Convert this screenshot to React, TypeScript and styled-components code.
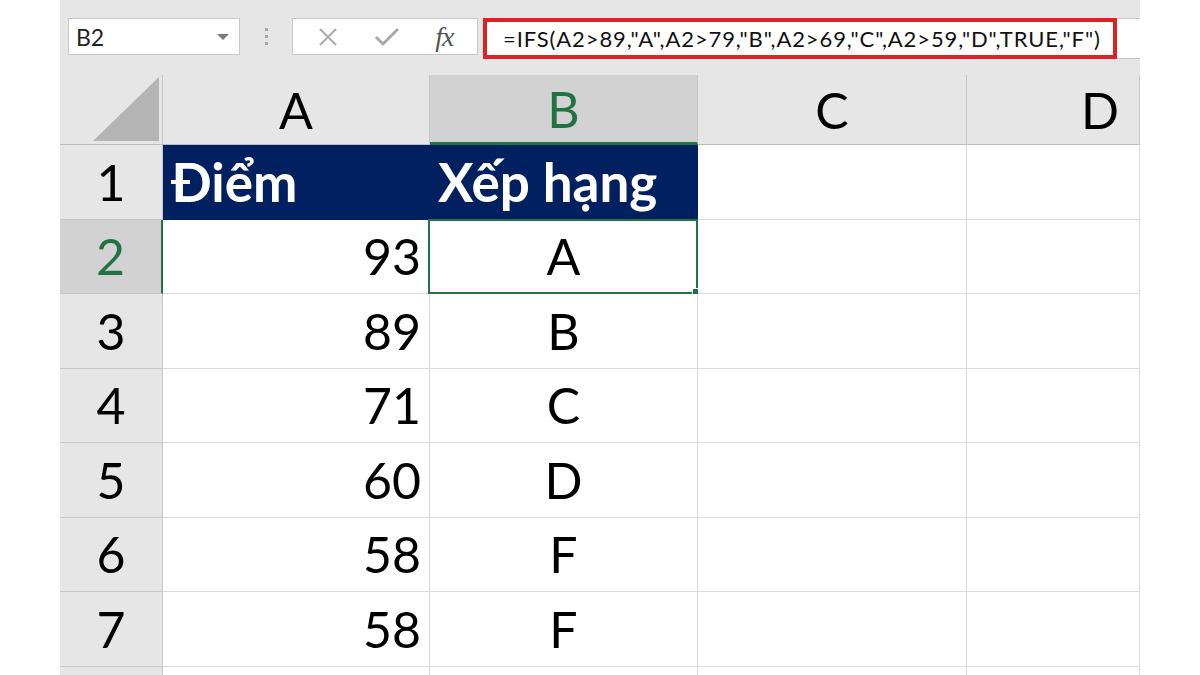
import React from 'react';
import styled, { createGlobalStyle } from 'styled-components';

const GlobalStyle = createGlobalStyle`
  html, body {
    margin: 0;
    padding: 0;
    background: #ffffff;
  }
  body {
    font-family: Lato, 'Open Sans', sans-serif;
  }
`;

const Page = styled.div`
  width: 1200px;
  height: 675px;
  overflow: hidden;
  background: #ffffff;
  display: flex;
  justify-content: center;
`;

const Sheet = styled.div`
  width: 1080px;
  height: 675px;
  display: flex;
  flex-direction: column;
  background: #e6e6e6;
  overflow: hidden;
`;

const FormulaBar = styled.div`
  height: 75px;
  flex-shrink: 0;
  display: flex;
  align-items: flex-start;
  padding: 18px 0 0 8px;
  box-sizing: border-box;
`;

const NameBox = styled.div`
  width: 172px;
  height: 37px;
  box-sizing: border-box;
  background: #ffffff;
  border: 1px solid #c8c8c8;
  display: flex;
  align-items: center;
  justify-content: space-between;
  padding: 0 10px 0 7px;
  font-size: 23px;
  color: #222;
`;

const Caret = styled.span`
  width: 0;
  height: 0;
  border-left: 6px solid transparent;
  border-right: 6px solid transparent;
  border-top: 6px solid #7a7a7a;
`;

const Dots = styled.div`
  width: 52px;
  height: 37px;
  display: flex;
  flex-direction: column;
  align-items: center;
  justify-content: center;
  gap: 4px;
`;

const Dot = styled.span`
  width: 3px;
  height: 3px;
  background: #a6a6a6;
`;

const ButtonBox = styled.div`
  width: 186px;
  height: 37px;
  box-sizing: border-box;
  background: #ffffff;
  border: 1px solid #c8c8c8;
  display: flex;
  align-items: center;
  justify-content: space-around;
  padding: 0 6px;
`;

const Fx = styled.span`
  font-family: 'Liberation Serif', serif;
  font-style: italic;
  font-size: 28px;
  color: #555;
  letter-spacing: -1px;
`;

const FormulaInput = styled.div`
  flex: 1;
  margin-left: 5px;
  height: 39px;
  display: flex;
  background: #ffffff;
  border-top: 1px solid #c8c8c8;
  border-bottom: 1px solid #c8c8c8;
`;

const Highlight = styled.div`
  width: 634px;
  box-sizing: border-box;
  border: 4px solid #e12026;
  margin: -1px 0;
  display: flex;
  align-items: center;
  padding-left: 16px;
  font-size: 22px;
  color: #111;
  white-space: nowrap;
  letter-spacing: 0.9px;
`;

const Grid = styled.div`
  display: grid;
  grid-template-columns: 103px 267px 268px 269px 173px;
  grid-template-rows: 70px repeat(8, 74.5px);
  background: #ffffff;
  font-size: 50px;
  flex-shrink: 0;
`;

const Corner = styled.div`
  background: #e6e6e6;
  border-right: 1px solid #c6c6c6;
  border-bottom: 1px solid #bcbcbc;
  display: flex;
  align-items: flex-end;
  justify-content: flex-end;
  padding: 0 3px 3px 0;
`;

const ColHead = styled.div<{ $active?: boolean; $end?: boolean }>`
  background: ${p => (p.$active ? '#d2d2d2' : '#e6e6e6')};
  color: ${p => (p.$active ? '#217346' : '#000')};
  border-right: 1px solid #c6c6c6;
  border-bottom: ${p => (p.$active ? '3px solid #217346' : '1px solid #bcbcbc')};
  display: flex;
  align-items: center;
  justify-content: ${p => (p.$end ? 'flex-end' : 'center')};
  padding-right: ${p => (p.$end ? '20px' : '0')};
  line-height: 1;
`;

const RowHead = styled.div<{ $active?: boolean }>`
  background: ${p => (p.$active ? '#d2d2d2' : '#e6e6e6')};
  color: ${p => (p.$active ? '#217346' : '#000')};
  border-right: ${p => (p.$active ? '2px solid #217346' : '1px solid #c6c6c6')};
  border-bottom: 1px solid #c6c6c6;
  display: flex;
  align-items: center;
  justify-content: center;
  line-height: 1;
`;

const Cell = styled.div<{ $align?: 'left' | 'center' | 'right'; $title?: boolean }>`
  position: relative;
  background: ${p => (p.$title ? '#002060' : '#ffffff')};
  color: ${p => (p.$title ? '#ffffff' : '#000')};
  font-weight: ${p => (p.$title ? 700 : 400)};
  font-size: ${p => (p.$title ? '53px' : '50px')};
  border-right: 1px solid ${p => (p.$title ? '#002060' : '#dadada')};
  border-bottom: 1px solid ${p => (p.$title ? '#002060' : '#dadada')};
  display: flex;
  align-items: center;
  justify-content: ${p =>
    p.$align === 'right' ? 'flex-end' : p.$align === 'center' ? 'center' : 'flex-start'};
  padding: 0 8px;
  line-height: 1;
  white-space: nowrap;
`;

const Selection = styled.div`
  position: absolute;
  inset: -1px -1px -1px -2px;
  border: 2px solid #217346;
  pointer-events: none;
`;

const FillHandle = styled.span`
  position: absolute;
  right: -5px;
  bottom: -5px;
  width: 7px;
  height: 7px;
  background: #217346;
  border: 1px solid #ffffff;
`;

const rows: [number, number, string][] = [
  [2, 93, 'A'],
  [3, 89, 'B'],
  [4, 71, 'C'],
  [5, 60, 'D'],
  [6, 58, 'F'],
  [7, 58, 'F'],
];

const App = () => {
  return (
    <Page>
      <GlobalStyle />
      <Sheet>
        <FormulaBar>
          <NameBox>
            <span>B2</span>
            <Caret />
          </NameBox>
          <Dots>
            <Dot />
            <Dot />
            <Dot />
          </Dots>
          <ButtonBox>
            <svg width="22" height="22" viewBox="0 0 22 22">
              <path d="M3 3 L19 19 M19 3 L3 19" stroke="#a9a9a9" strokeWidth="2" />
            </svg>
            <svg width="26" height="22" viewBox="0 0 26 22">
              <path d="M2 11 L9 18 L24 3" stroke="#a9a9a9" strokeWidth="3" fill="none" />
            </svg>
            <Fx>fx</Fx>
          </ButtonBox>
          <FormulaInput>
            <Highlight>=IFS(A2&gt;89,"A",A2&gt;79,"B",A2&gt;69,"C",A2&gt;59,"D",TRUE,"F")</Highlight>
          </FormulaInput>
        </FormulaBar>
        <Grid>
          <Corner>
            <svg width="66" height="64" viewBox="0 0 66 64">
              <polygon points="0,64 66,64 66,0" fill="#b4b4b4" />
            </svg>
          </Corner>
          <ColHead>A</ColHead>
          <ColHead $active>B</ColHead>
          <ColHead>C</ColHead>
          <ColHead $end>D</ColHead>

          <RowHead>1</RowHead>
          <Cell $title>Điểm</Cell>
          <Cell $title>Xếp hạng</Cell>
          <Cell />
          <Cell />

          {rows.map(([n, score, grade]) => (
            <React.Fragment key={n}>
              <RowHead $active={n === 2}>{n}</RowHead>
              <Cell $align="right">{score}</Cell>
              <Cell $align="center">
                {grade}
                {n === 2 && (
                  <Selection>
                    <FillHandle />
                  </Selection>
                )}
              </Cell>
              <Cell />
              <Cell />
            </React.Fragment>
          ))}

          <RowHead />
          <Cell />
          <Cell />
          <Cell />
          <Cell />
        </Grid>
      </Sheet>
    </Page>
  );
};

export default App;
